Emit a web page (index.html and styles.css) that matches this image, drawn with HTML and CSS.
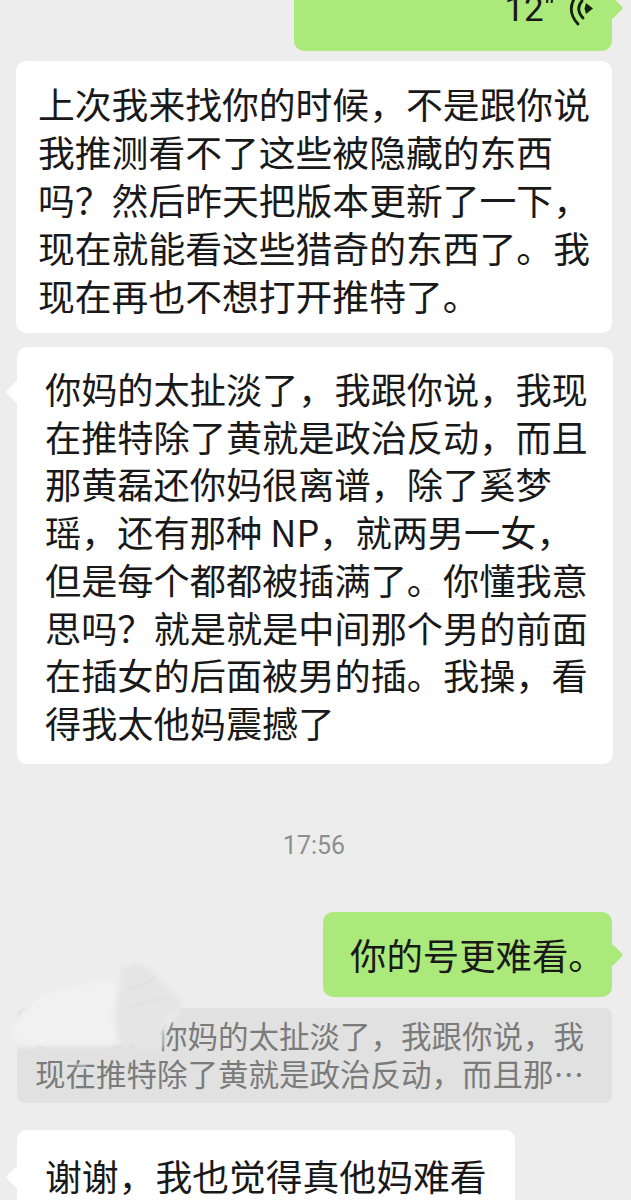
FILE: index.html
```html
<!DOCTYPE html>
<html lang="zh-CN">
<head>
  <meta charset="UTF-8">
  <meta name="viewport" content="width=device-width, initial-scale=1.0">
  <title>聊天记录</title>
  <link rel="stylesheet" href="styles.css">
</head>
<body>
  <div class="chat">
    <!-- voice message, scrolled partly off the top -->
    <div class="bubble green voice">
      <span class="voice-len">12"</span>
      <svg class="voice-icon" width="26" height="30" viewBox="0 0 26 30" fill="none" stroke="#15200f" stroke-width="2.8" stroke-linecap="round">
        <path d="M18 5 L25 10.500 L18 16 L16.500 10.500 Z" fill="#15200f" stroke="none"/>
        <path d="M14 3 Q7 11 15 20"/>
        <path d="M6 1 Q-1 14 10 26"/>
      </svg>
    </div>

    <div class="bubble white first">
      上次我来找你的时候，不是跟你说<br>
      我推测看不了这些被隐藏的东西<br>
      吗？然后昨天把版本更新了一下，<br>
      现在就能看这些猎奇的东西了。我<br>
      现在再也不想打开推特了。
    </div>

    <div class="bubble white incoming second">
      你妈的太扯淡了，我跟你说，我现<br>
      在推特除了黄就是政治反动，而且<br>
      那黄磊还你妈很离谱，除了奚梦<br>
      瑶，还有那种 NP，就两男一女，<br>
      但是每个都都被插满了。你懂我意<br>
      思吗？就是就是中间那个男的前面<br>
      在插女的后面被男的插。我操，看<br>
      得我太他妈震撼了
    </div>

    <div class="time">17:56</div>

    <div class="bubble green reply">你的号更难看。</div>

    <div class="quote">
      <div class="quote-text">
        <span class="quote-gap"></span>你妈的太扯淡了，我跟你说，我<br>
        现在推特除了黄就是政治反动，而且那…
      </div>
      <!-- scribble over the sender name -->
      <svg class="smudge" width="220" height="150" viewBox="0 0 220 150">
        <defs>
          <filter id="soft"><feGaussianBlur stdDeviation="2.500"/></filter>
          <filter id="softer"><feGaussianBlur stdDeviation="1"/></filter>
        </defs>
        <g filter="url(#soft)">
          <polygon points="6,80 40,42 90,30 125,14 170,48 180,62 150,100 110,96 14,98" fill="#ededed"/>
          <polygon points="8,80 42,44 90,32 122,30 130,70 118,96 20,94" fill="#f1f1f1"/>
          <polygon points="122,18 140,12 160,30 182,50 180,60 165,70 162,100 120,98 114,70" fill="#e5e5e5"/>
        </g>
        <g filter="url(#softer)" fill="none" stroke="#d4d4d4" stroke-width="1.500">
          <path d="M38 97 L46 99"/>
          <path d="M112 96 L122 98"/>
          <path d="M130 96 L136 97"/>
          <path d="M66 113 L86 116" stroke="#ececec"/>
          <path d="M130 40 L155 28" stroke="#dcdcdc"/>
          <path d="M126 58 L170 46" stroke="#dedede"/>
        </g>
      </svg>
    </div>

    <div class="bubble white incoming last">谢谢，我也觉得真他妈难看</div>
  </div>
</body>
</html>
```

FILE: styles.css
```css
html, body {
  margin: 0;
  height: 1200px;
  overflow: hidden;
}
body {
  background-color: #ededed;
  font-family: "Noto Sans CJK SC", "Noto Sans", sans-serif;
  color: #191919;
}
.chat {
  display: flex;
  flex-direction: column;
  padding: 0 19px 0 16px;
}
.bubble {
  position: relative;
  box-sizing: border-box;
  border-radius: 10px;
  font-size: 36.800px;
  line-height: 48px;
  white-space: nowrap;
}
.green {
  background-color: #abe97b;
  align-self: flex-end;
}
.white {
  background-color: #fff;
}

/* little triangle on the side of a bubble */
.green::after,
.incoming::before {
  content: "";
  position: absolute;
  width: 16px;
  height: 16px;
  transform: rotate(45deg);
  border-radius: 2px;
}
.green::after {
  right: -8px;
  background-color: #abe97b;
}
.incoming::before {
  left: -8px;
  background-color: #fff;
}

.voice {
  width: 318px;
  height: 81px;
  margin-top: -30px;
  display: flex;
  justify-content: flex-end;
  align-items: flex-start;
  gap: 13px;
  padding: 19px 18px 0 0;
}
.voice::after {
  top: 30px;
}
.voice-len {
  font-family: Roboto, sans-serif;
  font-size: 35px;
  line-height: 40px;
  margin-top: 1px;
}
.voice-icon {
  margin-top: 9px;
  overflow: visible;
}

.first {
  margin-top: 10px;
  height: 272px;
  padding: 18px 0 0 22px;
}
.second {
  margin: 14px -1px 0 1px;
  height: 417px;
  padding: 18px 0 0 28px;
  font-size: 36.200px;
  line-height: 47.700px;
}
.second::before {
  top: 37px;
}

.time {
  margin-top: 65px;
  text-align: center;
  font-family: Roboto, sans-serif;
  font-size: 25px;
  line-height: 34px;
  color: #8f8f8f;
}

.reply {
  margin-top: 49px;
  width: 289px;
  height: 85px;
  padding: 18px 0 0 27px;
  font-size: 36.400px;
}
.reply::after {
  top: 35px;
}

.quote {
  position: relative;
  box-sizing: border-box;
  margin: 11px 0 0 1px;
  height: 95px;
  padding: 8px 0 0 18px;
  background-color: #e1e1e1;
  border-radius: 8px;
  font-size: 30.500px;
  line-height: 38px;
  color: #7b7b7b;
  white-space: nowrap;
}
.quote-gap {
  display: inline-block;
  width: 122px;
}
.smudge {
  position: absolute;
  left: -17px;
  top: -58px;
}

.last {
  margin: 27px 0 0 1px;
  width: 498px;
  height: 100px;
  padding: 21px 0 0 28px;
  font-size: 36.800px;
}
.last::before {
  top: 39px;
}
```
